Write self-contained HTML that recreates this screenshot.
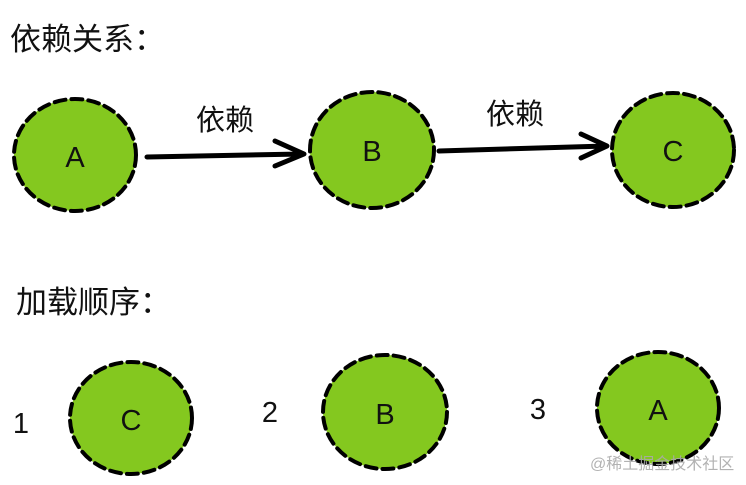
<!DOCTYPE html>
<html><head><meta charset="utf-8"><style>
html,body{margin:0;padding:0;background:#fff;width:746px;height:485px;overflow:hidden}
</style></head><body>
<svg width="746" height="485" xmlns="http://www.w3.org/2000/svg" style="display:block">
<g font-family="Liberation Sans, Noto Sans CJK SC, sans-serif" fill="#111">
<text x="10" y="50" font-size="31">依赖关系：</text>
<text x="196" y="130" font-size="29">依赖</text>
<text x="486" y="124" font-size="29">依赖</text>
<text x="16" y="313" font-size="31">加载顺序：</text>
</g>
<g fill="#84c81f" stroke="#000" stroke-width="4" stroke-dasharray="11 6" stroke-linecap="round">
<ellipse cx="75" cy="155" rx="61" ry="56"/>
<ellipse cx="372" cy="150" rx="62" ry="58"/>
<ellipse cx="673" cy="150" rx="61" ry="57"/>
<ellipse cx="131" cy="418" rx="61" ry="56"/>
<ellipse cx="385" cy="412" rx="62" ry="57"/>
<ellipse cx="658" cy="408" rx="61" ry="56"/>
</g>
<g fill="none" stroke="#000" stroke-width="5" stroke-linecap="round" stroke-linejoin="round">
<path d="M147 157 L302 154 M275 141 L304 154 L275 166"/>
<path d="M439 151 L606 146 M581 134 L607 146 L581 158"/>
</g>
<g font-family="Liberation Sans, sans-serif" font-size="29" fill="#111" text-anchor="middle">
<text x="75" y="167">A</text>
<text x="372" y="161">B</text>
<text x="673" y="161">C</text>
<text x="131" y="430">C</text>
<text x="385" y="424">B</text>
<text x="658" y="420">A</text>
<text x="21" y="433">1</text>
<text x="270" y="422">2</text>
<text x="538" y="419">3</text>
</g>
<text x="590" y="469" font-family="Liberation Sans, Noto Sans CJK SC, sans-serif" font-size="16" fill="#aaa" opacity="0.9">@稀土掘金技术社区</text>
</svg>
</body></html>
